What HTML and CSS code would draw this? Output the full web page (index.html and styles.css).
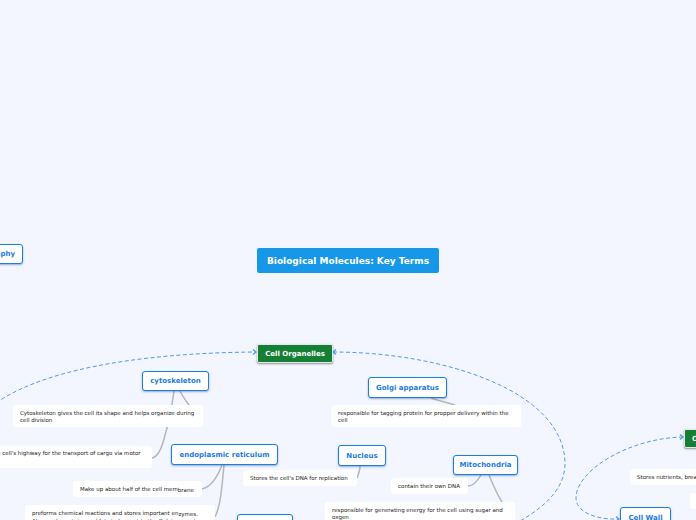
FILE: index.html
```html
<!DOCTYPE html>
<html lang="en">
<head>
<meta charset="utf-8">
<title>Biological Molecules: Key Terms</title>
<link rel="stylesheet" href="styles.css">
</head>
<body>
<main class="canvas">
  <svg class="links" width="696" height="520" viewBox="0 0 696 520" fill="none">
    <g class="relation">
      <path d="M-4 403C40 372 130 353 256 352"/>
      <path d="M333 352C440 352 566 390 565 465C564 492 540 510 515 524"/>
      <path d="M683 437C630 438 576 470 576 498C576 512 596 520 619 519"/>
    </g>
    <g class="heads">
      <path d="M253 349.500l3 2.500-3 2.500"/>
      <path d="M336 349.500l-3 2.500 3 2.500"/>
      <path d="M680 434.500l3 2.500-3 2.500"/>
      <path d="M616 516.500l3 2.500-3 2.500"/>
    </g>
    <g class="branch">
      <path d="M174 391C172 405 170 420 165 435C162 448 158 457 152 458"/>
      <path d="M180 391C183 397 186 401 189 405"/>
      <path d="M222 465C217 478 211 487 202 489"/>
      <path d="M224 465C222 485 221 505 215 517"/>
      <path d="M360 466C360 470 359 473 357 478"/>
      <path d="M431 398C440 401 448 403 455 405"/>
      <path d="M481 475C477 482 472 486 468 486"/>
      <path d="M489 475C493 485 497 494 502 502"/>
    </g>
  </svg>

  <div class="node root">Biological Molecules: Key Terms</div>
  <div class="node green organelles">Cell Organelles</div>
  <div class="node green other">Other</div>

  <div class="node topic photo">Photosynthesis &amp; Geography</div>
  <div class="node topic cyto">cytoske<span class="drop">leton</span></div>
  <div class="node topic er">endoplasmic reticulum</div>
  <div class="node topic golgi">Golgi apparatus</div>
  <div class="node topic nucleus">Nucleus</div>
  <div class="node topic mito">Mitochondria</div>
  <div class="node topic wall">Cell Wall</div>
  <div class="node topic ribo">Ribosomes</div>

  <p class="note cyto-note">Cytoskeleton gives the cell its shape and helps organize during cell division</p>
  <p class="note highway">Acts as the cell's highway for the transport of cargo via motor proteins</p>
  <p class="note half">Make up about half of the cell mem<span class="drop">brane</span></p>
  <p class="note enzymes">preforms chemical reactions and stores important en<span class="drop">zymes.</span> Also made proteins and fats to be sent to the Golgi apparatus</p>
  <p class="note dna">Stores the cell's DNA for replication</p>
  <p class="note tag">responsible for tagging protein for propper delivery within the cell</p>
  <p class="note own">contain their own DNA</p>
  <p class="note energy">responsible for generating energy for the cell using sugar and oxgen</p>
  <p class="note vacuole">Stores nutrients, breaks down waste and more</p>
  <p class="note extra">Provides structure</p>
</main>
</body>
</html>
```

FILE: styles.css
```css
* {
  box-sizing: border-box;
}

html,
body {
  margin: 0;
  height: 100%;
  overflow: hidden;
  background: #f3f6ff;
}

.canvas {
  position: relative;
  width: 696px;
  height: 520px;
  overflow: hidden;
  font-family: "DejaVu Sans", Verdana, sans-serif;
}

.links {
  position: absolute;
  inset: 0;
}

.relation,
.heads {
  stroke: #4f9ceb;
  stroke-width: 1;
}

.relation {
  stroke-dasharray: 4 2.500;
}

.heads {
  stroke-width: 1.300;
}

.branch {
  stroke: #b4b6bb;
  stroke-width: 1.500;
}

.node {
  position: absolute;
  display: flex;
  align-items: center;
  justify-content: center;
  white-space: nowrap;
  font-weight: 700;
}

.drop {
  vertical-align: -1px;
}

.root {
  left: 257px;
  top: 248px;
  width: 182px;
  height: 25px;
  border-radius: 2px;
  background: #1797e8;
  color: #fff;
  font-size: 9px;
}

.green {
  height: 19px;
  border: 1px solid #e4e8ea;
  border-radius: 2px;
  background: #147f35;
  box-shadow: 0 1px 2px rgba(60, 60, 60, 0.55);
  color: #fff;
  font-size: 7px;
}

.organelles {
  left: 257px;
  top: 344px;
  width: 76px;
}

.other {
  left: 684px;
  top: 429px;
  width: 60px;
  justify-content: flex-start;
  padding-left: 7px;
}

.topic {
  border: 1.500px solid #1a7fe0;
  border-radius: 3px;
  background: #fff;
  box-shadow: 0 1px 2px rgba(60, 100, 150, 0.5);
  color: #1a7be0;
  font-size: 7px;
}

.photo {
  left: -120px;
  top: 244px;
  width: 143px;
  height: 20px;
  justify-content: flex-end;
  padding-right: 7px;
}

.cyto {
  left: 142px;
  top: 371px;
  width: 67px;
  height: 20px;
}

.er {
  left: 171px;
  top: 444px;
  width: 107px;
  height: 21px;
}

.golgi {
  left: 368px;
  top: 377px;
  width: 79px;
  height: 21px;
}

.nucleus {
  left: 338px;
  top: 445px;
  width: 48px;
  height: 21px;
}

.mito {
  left: 453px;
  top: 455px;
  width: 65px;
  height: 20px;
}

.wall {
  left: 620px;
  top: 507px;
  width: 51px;
  height: 21px;
}

.ribo {
  left: 237px;
  top: 514px;
  width: 56px;
  height: 21px;
}

.note {
  position: absolute;
  margin: 0;
  padding: 5px 7px;
  border-radius: 3px;
  background: #fff;
  color: #222;
  font-size: 5.500px;
  line-height: 7px;
}

.cyto-note {
  left: 13px;
  top: 405px;
  width: 190px;
  height: 22px;
}

.highway {
  left: -37px;
  top: 446px;
  width: 189px;
  height: 22px;
  padding-top: 4px;
}

.half {
  left: 73px;
  top: 481px;
  width: 129px;
  height: 16px;
  white-space: nowrap;
}

.enzymes {
  left: 25px;
  top: 505px;
  width: 190px;
  height: 30px;
}

.dna {
  left: 243px;
  top: 470px;
  width: 114px;
  height: 16px;
  white-space: nowrap;
}

.tag {
  left: 331px;
  top: 405px;
  width: 190px;
  height: 22px;
}

.own {
  left: 391px;
  top: 478px;
  width: 77px;
  height: 16px;
  white-space: nowrap;
}

.energy {
  left: 325px;
  top: 502px;
  width: 190px;
  height: 30px;
}

.vacuole {
  left: 630px;
  top: 469px;
  width: 190px;
  height: 16px;
  white-space: nowrap;
}

.extra {
  left: 690px;
  top: 493px;
  width: 100px;
  height: 16px;
  color: #fff;
  white-space: nowrap;
}
```
